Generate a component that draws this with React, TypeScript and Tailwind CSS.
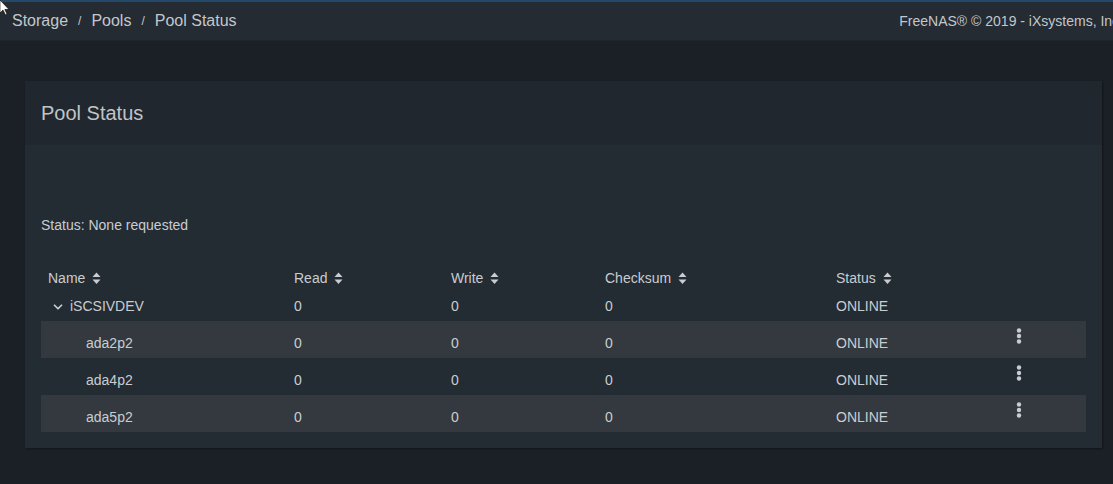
import { ChevronDown } from "lucide-react";

const SortIcon = () => (
  <svg width="9" height="13" viewBox="0 0 9 13" className="ml-[7px] inline-block">
    <path d="M4.5 0.5 L8.5 5 L0.5 5 Z" fill="currentColor" />
    <path d="M0.5 7.5 L8.5 7.5 L4.5 12 Z" fill="currentColor" />
  </svg>
);

const Dots = () => (
  <svg width="6" height="16" viewBox="0 0 6 16">
    <circle cx="3" cy="2.5" r="2.2" fill="#c9cdd1" />
    <circle cx="3" cy="8" r="2.2" fill="#c9cdd1" />
    <circle cx="3" cy="13.5" r="2.2" fill="#c9cdd1" />
  </svg>
);

const cols = "grid grid-cols-[246px_157px_154px_231px_176px_1fr] px-[7px]";

const disks = ["ada2p2", "ada4p2", "ada5p2"];

export default function App() {
  return (
    <div
      className="relative w-[1113px] h-[484px] overflow-hidden bg-[#1b2027] text-[#c9cdd1]"
      style={{ fontFamily: '"Liberation Sans", Arial, sans-serif' }}
    >
      {/* top bar */}
      <div className="h-[2px] bg-[#24496b]" />
      <div className="h-[39px] bg-[#242b33] flex items-center pl-[12px] border-b border-[#1f252c]">
        <div className="flex items-center text-[16px] text-[#c3c7cb] whitespace-nowrap">
          <span>Storage</span>
          <span className="mx-[10px] text-[12px]">/</span>
          <span>Pools</span>
          <span className="mx-[10px] text-[12px]">/</span>
          <span>Pool Status</span>
        </div>
        <span className="ml-auto -mr-[10px] text-[14px] text-[#c3c7cb] whitespace-nowrap shrink-0">
          FreeNAS® © 2019 - iXsystems, Inc.
        </span>
      </div>

      {/* card */}
      <div className="mt-[40px] ml-[25px] w-[1077px] bg-[#232b33] shadow-[1px_1px_2px_rgba(0,0,0,0.35)]">
        <div className="h-[64px] bg-[#20272e] flex items-center px-[16px]">
          <h1 className="text-[20px] text-[#c0c4c8]">Pool Status</h1>
        </div>
        <div className="px-[16px] pt-[70px] pb-[16px] text-[14px]">
          <div className="h-[20px] leading-[20px]">Status: None requested</div>
          <div className="mt-[29px]">
            <div className={`${cols} h-[28px] items-center`}>
              {["Name", "Read", "Write", "Checksum", "Status"].map((h) => (
                <div key={h} className="flex items-center">
                  {h}
                  <SortIcon />
                </div>
              ))}
              <div />
            </div>
            <div className={`${cols} h-[29px] items-center`}>
              <div className="flex items-center pl-[3px]">
                <ChevronDown size={14} strokeWidth={3} className="mr-[5px]" />
                iSCSIVDEV
              </div>
              <div>0</div>
              <div>0</div>
              <div>0</div>
              <div>ONLINE</div>
              <div />
            </div>
            {disks.map((d, i) => (
              <div
                key={d}
                className={`${cols} h-[37px] items-center ${i % 2 === 0 ? "bg-[#33393f]" : ""}`}
              >
                <div className="mt-[7px] pl-[38px]">{d}</div>
                <div className="mt-[7px]">0</div>
                <div className="mt-[7px]">0</div>
                <div className="mt-[7px]">0</div>
                <div className="mt-[7px]">ONLINE</div>
                <div className="mb-[7px] pl-[4px] flex">
                  <Dots />
                </div>
              </div>
            ))}
          </div>
        </div>
      </div>

      {/* mouse pointer */}
      <svg width="10" height="16" viewBox="0 0 10 16" className="absolute left-0 top-0">
        <path d="M0 0 L0 13 L3 10 L5.5 15 L7 14 L4.8 9.5 L9 9.5 Z" fill="#ffffff" stroke="#000" strokeWidth="0.6" />
      </svg>
    </div>
  );
}
